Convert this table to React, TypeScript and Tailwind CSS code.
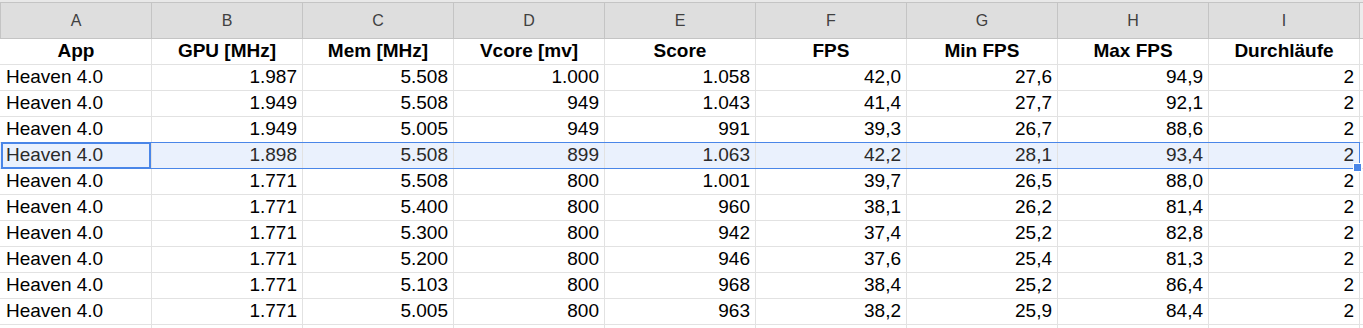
import React from 'react';

const cols = ['A', 'B', 'C', 'D', 'E', 'F', 'G', 'H', 'I'];
const heads = ['App', 'GPU [MHz]', 'Mem [MHz]', 'Vcore [mv]', 'Score', 'FPS', 'Min FPS', 'Max FPS', 'Durchläufe'];

const rows: string[][] = [
  ['1.987', '5.508', '1.000', '1.058', '42,0', '27,6', '94,9', '2'],
  ['1.949', '5.508', '949', '1.043', '41,4', '27,7', '92,1', '2'],
  ['1.949', '5.005', '949', '991', '39,3', '26,7', '88,6', '2'],
  ['1.898', '5.508', '899', '1.063', '42,2', '28,1', '93,4', '2'],
  ['1.771', '5.508', '800', '1.001', '39,7', '26,5', '88,0', '2'],
  ['1.771', '5.400', '800', '960', '38,1', '26,2', '81,4', '2'],
  ['1.771', '5.300', '800', '942', '37,4', '25,2', '82,8', '2'],
  ['1.771', '5.200', '800', '946', '37,6', '25,4', '81,3', '2'],
  ['1.771', '5.103', '800', '968', '38,4', '25,2', '86,4', '2'],
  ['1.771', '5.005', '800', '963', '38,2', '25,9', '84,4', '2'],
];

const SELECTED = 3;

export default function App() {
  return (
    <div
      className="relative w-[1363px] h-[328px] overflow-hidden bg-white text-black"
      style={{ fontFamily: '"Liberation Sans", Arial, sans-serif' }}
    >
      {/* top strip */}
      <div className="h-[2px] bg-[#e8e8e8]" />

      {/* column letters */}
      <div className="flex h-[37px] border-y border-[#c4c4c4] bg-[#ececec]">
        <div className="w-px bg-[#c4c4c4]" />
        {cols.map((c) => (
          <div
            key={c}
            className="w-[151px] shrink-0 flex items-center justify-center border-r border-[#c4c4c4] bg-[#dedede] text-[16px] text-[#404040]"
          >
            {c}
          </div>
        ))}
      </div>

      {/* header row */}
      <div className="flex h-[26px] border-b border-[#e2e2e2]">
        <div className="w-px" />
        {heads.map((h) => (
          <div
            key={h}
            className="w-[151px] shrink-0 border-r border-[#e2e2e2] text-center font-bold text-[19px] leading-[24px]"
          >
            {h}
          </div>
        ))}
      </div>

      {rows.map((r, i) => {
        const sel = i === SELECTED;
        return (
          <div key={i} className="flex h-[26px] border-b border-[#e2e2e2]">
            <div className={`w-px ${sel ? 'bg-[#eaf1fd]' : ''}`} />
            <div
              className={`w-[151px] shrink-0 border-r border-[#e2e2e2] px-[5px] text-[19px] leading-[24px] ${sel ? 'bg-[#eaf1fd] text-[#2a2a2a]' : ''}`}
            >
              Heaven 4.0
            </div>
            {r.map((v, j) => (
              <div
                key={j}
                className={`w-[151px] shrink-0 border-r border-[#e2e2e2] px-[5px] text-right text-[19px] leading-[24px] ${sel ? 'bg-[#eaf1fd] text-[#2a2a2a]' : ''}`}
              >
                {v}
              </div>
            ))}
          </div>
        );
      })}

      {/* empty trailing row */}
      <div className="flex h-[26px] border-b border-[#e2e2e2]">
        <div className="w-px" />
        {cols.map((c) => (
          <div key={c} className="w-[151px] shrink-0 border-r border-[#e2e2e2]" />
        ))}
      </div>

      {/* range selection */}
      <div className="absolute left-[151px] top-[142px] w-[1209px] h-[27px] border-y border-r border-[#4a86e8] pointer-events-none" />
      {/* active cell */}
      <div className="absolute left-px top-[142px] w-[150px] h-[27px] border-2 border-[#4a86e8] pointer-events-none" />
      {/* fill handle */}
      <div className="absolute left-[1353px] top-[163px] w-[9px] h-[9px] bg-[#4a86e8] border border-white" />
    </div>
  );
}
